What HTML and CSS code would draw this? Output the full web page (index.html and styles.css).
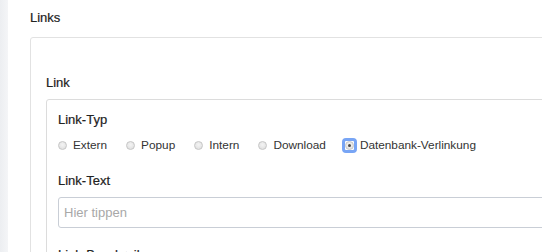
FILE: index.html
```html
<!DOCTYPE html>
<html lang="de">
<head>
    <meta charset="UTF-8">
    <meta name="viewport" content="width=device-width, initial-scale=1.0">
    <title>Links</title>
    <link rel="stylesheet" href="styles.css">
</head>
<body>
    <div class="sidebar"></div>
    <div class="main">
        <h3 class="section-title">Links</h3>
        <div class="panel">
            <h4 class="group-title">Link</h4>
            <div class="group">
                <div class="field">
                    <label class="field-label">Link-Typ</label>
                    <div class="radio-row">
                        <label class="radio-item"><span class="radio"></span>Extern</label>
                        <label class="radio-item"><span class="radio"></span>Popup</label>
                        <label class="radio-item"><span class="radio"></span>Intern</label>
                        <label class="radio-item"><span class="radio"></span>Download</label>
                        <label class="radio-item"><span class="radio checked focused"></span>Datenbank-Verlinkung</label>
                    </div>
                </div>
                <div class="field">
                    <label class="field-label">Link-Text</label>
                    <input class="text-input" type="text" placeholder="Hier tippen">
                </div>
                <div class="field">
                    <label class="field-label">Link-Beschreibung</label>
                    <input class="text-input" type="text" placeholder="Hier tippen">
                </div>
            </div>
        </div>
    </div>
</body>
</html>
```

FILE: styles.css
```css
body { margin: 0; display: flex; height: 252px; overflow: hidden; font-family: "Liberation Sans", Arial, sans-serif; color: #333; background: #fff; }
.sidebar { flex: none; width: 8px; background: linear-gradient(to right, #eceef1, #f4f5f7); }
.main { flex: none; width: 620px; padding: 10px 0 0 22px; }
.section-title, .group-title, .field-label { font-size: 13px; line-height: 16px; font-weight: normal; color: #222; -webkit-text-stroke: 0.2px #222; }
.section-title { margin: 0 0 11px; }
.panel { border: 1px solid #e2e2e2; border-radius: 3px; padding: 37px 0 0 15px; }
.group-title { margin: 0 0 8px; }
.group { border: 1px solid #dcdcdc; border-radius: 3px; padding: 12px 0 0 11px; }
.field { margin-bottom: 19px; }
.field-label { display: block; margin-bottom: 8px; }
.radio-row { display: flex; align-items: center; gap: 19px; height: 18px; font-size: 11.8px; line-height: 18px; color: #333; }
.radio-item { display: flex; align-items: center; }
.radio { position: relative; width: 7px; height: 7px; margin-right: 6px; border: 1px solid #c6c6c6; border-radius: 50%; background: radial-gradient(circle at 50% 40%, #f4f4f4, #dcdcdc); }
.radio.checked::after { content: ""; position: absolute; left: 2px; top: 2px; width: 3px; height: 3px; border-radius: 50%; background: #4a4a4a; }
.radio.focused::before { content: ""; position: absolute; left: -4px; top: -4px; width: 9px; height: 9px; border: 3px solid #78a5f5; border-radius: 4px; }
.text-input { display: block; box-sizing: border-box; width: 100%; height: 31px; padding: 0 5px; border: 1px solid #c9ced6; border-radius: 3px; font-family: inherit; font-size: 13px; color: #333; }
.text-input::placeholder { color: #a8a8a8; }
```
